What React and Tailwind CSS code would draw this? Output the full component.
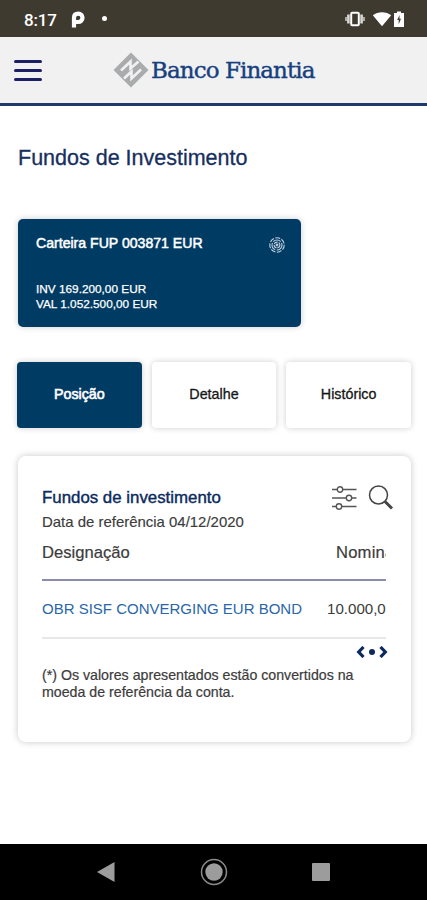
const TABS = ["Posição", "Detalhe", "Histórico"];

function StatusBar() {
  return (
    <div className="h-[37px] bg-[#3f3a30] flex items-center pl-6 pr-[23px] text-white">
      <span className="font-[Roboto] text-[17px] leading-5 font-medium tracking-[-0.2px] w-[47px] pt-0.5">8:17</span>
      <svg width="14" height="18" viewBox="0 0 14 18" className="mt-0.5">
        <path d="M3 16.5V6.8C3 3.8 5 2.6 7.3 2.6a4 4 0 0 1 0 8.4H4.5" fill="none" stroke="white" strokeWidth="4.2" />
        <circle cx="7.2" cy="6.8" r="1.4" fill="#3f3a30" />
      </svg>
      <span className="size-[5px] rounded-full bg-white ml-[17px]" />
      <div className="ml-auto flex items-center">
        <svg width="20" height="16" viewBox="0 0 20 16">
          <rect x="6.2" y="1.8" width="7.6" height="12.4" rx="1" fill="none" stroke="white" strokeWidth="2" />
          <path d="M3.4 3.5v9M16.6 3.5v9" stroke="#d9d7d3" strokeWidth="2.6" />
          <path d="M1 6v4M19 6v4" stroke="#b9b6b0" strokeWidth="1.8" />
        </svg>
        <svg width="20" height="16" viewBox="0 0 20 16" className="ml-[7px]">
          <path d="M0.8 4.2C6 0.2 14 0.2 19.2 4.2L10 15.2Z" fill="white" />
        </svg>
        <svg width="10" height="16" viewBox="0 0 10 16" className="ml-[2px]">
          <path d="M0 2h3V0.5h4V2h3v14H0z" fill="white" />
          <path d="M5.5 4 3.2 9h1.5v4.2L7 7.8H5.5z" fill="#3f3a30" />
        </svg>
      </div>
    </div>
  );
}

function Header() {
  return (
    <header className="h-[69px] bg-[#f1f1f1] border-b-[3px] border-[#1d3c6c] flex items-center pl-3.5">
      <div className="flex flex-col gap-[6px] w-7">
        <span className="h-[3px] rounded-full bg-[#1b1f63]" />
        <span className="h-[3px] rounded-full bg-[#1b1f63]" />
        <span className="h-[3px] rounded-full bg-[#1b1f63]" />
      </div>
      <div className="flex items-center ml-[71px]">
        <svg width="36" height="36" viewBox="0 0 36 36">
          <path d="M18 0.5 35.5 18 18 35.5 0.5 18Z" fill="#aaabad" />
          <path d="M8 18.5 17.5 9.5V16.5L25.5 9.5" fill="none" stroke="#f1f1f1" strokeWidth="2.6" />
          <path d="M11 26.5 18.5 19.5V26.5L28 17.5" fill="none" stroke="#f1f1f1" strokeWidth="2.6" />
        </svg>
        <span className="ml-[2px] font-['DejaVu_Serif',serif] text-[23px] leading-7 tracking-[-0.92px] text-[#16407f] [-webkit-text-stroke:0.4px_#16407f] whitespace-nowrap">Banco Finantia</span>
      </div>
    </header>
  );
}

function RosetteIcon() {
  return (
    <svg width="16" height="16" viewBox="0 0 16 16" fill="none" stroke="#c3d2df" strokeWidth="1.1" className="mt-[3px] mr-[-2px]">
      <circle cx="8" cy="8" r="7.2" strokeDasharray="5 1.4" />
      <circle cx="8" cy="8" r="5" strokeDasharray="8 1.5" />
      <circle cx="8" cy="8" r="2.9" strokeDasharray="4 1" />
      <circle cx="8" cy="8" r="0.9" />
    </svg>
  );
}

function AccountCard() {
  return (
    <section className="mt-[48px] w-[283px] h-[108px] rounded-[5px] bg-[#003b64] text-white px-[18px] pt-[15px] shadow-[0_0_6px_rgba(0,0,0,0.2)]">
      <div className="flex justify-between">
        <h2 className="text-[14.1px] leading-[18px] [-webkit-text-stroke:0.5px_white]">Carteira FUP 003871 EUR</h2>
        <RosetteIcon />
      </div>
      <p className="mt-[29px] text-[11.8px] leading-[14.5px] [-webkit-text-stroke:0.25px_white]">
        INV 169.200,00 EUR<br />VAL 1.052.500,00 EUR
      </p>
    </section>
  );
}

function Tabs() {
  return (
    <nav className="mt-[35px] -ml-px grid grid-cols-3 gap-2.5 h-[66px]">
      {TABS.map((label, i) => (
        <button key={label}
          className={"rounded-[4px] text-[14.3px] shadow-[0_0_6px_rgba(0,0,0,0.2)] " + (i === 0
            ? "bg-[#003b64] text-white [-webkit-text-stroke:0.6px_white]"
            : "bg-white text-[#161616] [-webkit-text-stroke:0.3px_#161616]")}
        >{label}</button>
      ))}
    </nav>
  );
}

function FundsPanel() {
  return (
    <section className="mt-[28px] h-[286px] rounded-lg bg-white px-[24px] pt-[31px] shadow-[0_0_7px_rgba(0,0,0,0.22)] text-[#3c3c3c]">
      <div className="flex justify-between h-[53px]">
        <div>
          <h3 className="text-[16.85px] leading-[22px] text-[#0b2a5e] [-webkit-text-stroke:0.4px_#0b2a5e]">Fundos de investimento</h3>
          <p className="mt-[2px] text-[14.95px] leading-[22px] [-webkit-text-stroke:0.15px_#3c3c3c]">Data de referência 04/12/2020</p>
        </div>
        <div className="flex gap-[11px] mr-[-7px] -mt-[2px]">
          <svg width="25" height="26" viewBox="0 0 25 26" fill="none" stroke="#555" strokeWidth="1.4">
            <path d="M0 4.5h5M11 4.5h13.5M0 13h14M20 13h4.5M0 21.5h4M10 21.5h14.5" />
            <circle cx="8" cy="4.5" r="2.7" />
            <circle cx="17" cy="13" r="2.7" />
            <circle cx="7" cy="21.5" r="2.7" />
          </svg>
          <svg width="26" height="26" viewBox="0 0 26 26" fill="none" stroke="#444">
            <circle cx="10.5" cy="10" r="9" strokeWidth="1.5" />
            <path d="M17 16.5 24 23.5" strokeWidth="3" />
          </svg>
        </div>
      </div>
      <div className="flex justify-between w-[344px] h-[41px] pt-[2px] text-[16.6px] leading-[22px] border-b-2 border-[#8a8da8] [-webkit-text-stroke:0.2px_#3c3c3c]">
        <span>Designação</span>
        <span className="w-[50px] overflow-hidden whitespace-nowrap tracking-[0.2px]">Nominal</span>
      </div>
      <div className="flex justify-between w-[344px] h-[58px] pt-[17px] text-[15px] leading-[22px] border-b-2 border-[#e8e8e8]">
        <span className="text-[#2a66a8] whitespace-nowrap">OBR SISF CONVERGING EUR BOND</span>
        <span className="w-[59px] overflow-hidden whitespace-nowrap text-[15.1px]">10.000,0</span>
      </div>
      <div className="flex justify-end w-[346px] pt-[7px]">
        <svg width="32" height="12" viewBox="0 0 32 12" fill="none" stroke="#0b2a5e" strokeWidth="3.2">
          <path d="M7.5 1 2.7 6l4.8 5M24.5 1l4.8 5-4.8 5" />
          <circle cx="16" cy="6" r="3" fill="#0b2a5e" stroke="none" />
        </svg>
      </div>
      <p className="mt-[9px] text-[14.2px] leading-[17px] [-webkit-text-stroke:0.2px_#3c3c3c] whitespace-nowrap">
        (*) Os valores apresentados estão convertidos na<br />moeda de referência da conta.
      </p>
    </section>
  );
}

function NavBar() {
  return (
    <div className="mt-auto h-14 bg-black flex justify-between items-center pl-[97px] pr-[97px]">
      <svg width="18" height="20" viewBox="0 0 18 20"><path d="M0 10 17.5 0v20z" fill="#9c9c9c" /></svg>
      <svg width="28" height="28" viewBox="0 0 28 28">
        <circle cx="14" cy="14" r="12.5" fill="none" stroke="#8c8c8c" strokeWidth="1.5" />
        <circle cx="14" cy="14" r="8.7" fill="#9c9c9c" />
      </svg>
      <span className="size-[18px] rounded-[1px] bg-[#9c9c9c]" />
    </div>
  );
}

export default function App() {
  return (
    <div className="w-[427px] h-[900px] bg-white flex flex-col overflow-hidden font-['Liberation_Sans',Arial,sans-serif]">
      <StatusBar />
      <Header />
      <main className="pl-[18px] pr-4 pt-[39px]">
        <h1 className="text-[21.5px] leading-[26px] text-[#172f60] [-webkit-text-stroke:0.3px_#172f60]">Fundos de Investimento</h1>
        <AccountCard />
        <Tabs />
        <FundsPanel />
      </main>
      <NavBar />
    </div>
  );
}
